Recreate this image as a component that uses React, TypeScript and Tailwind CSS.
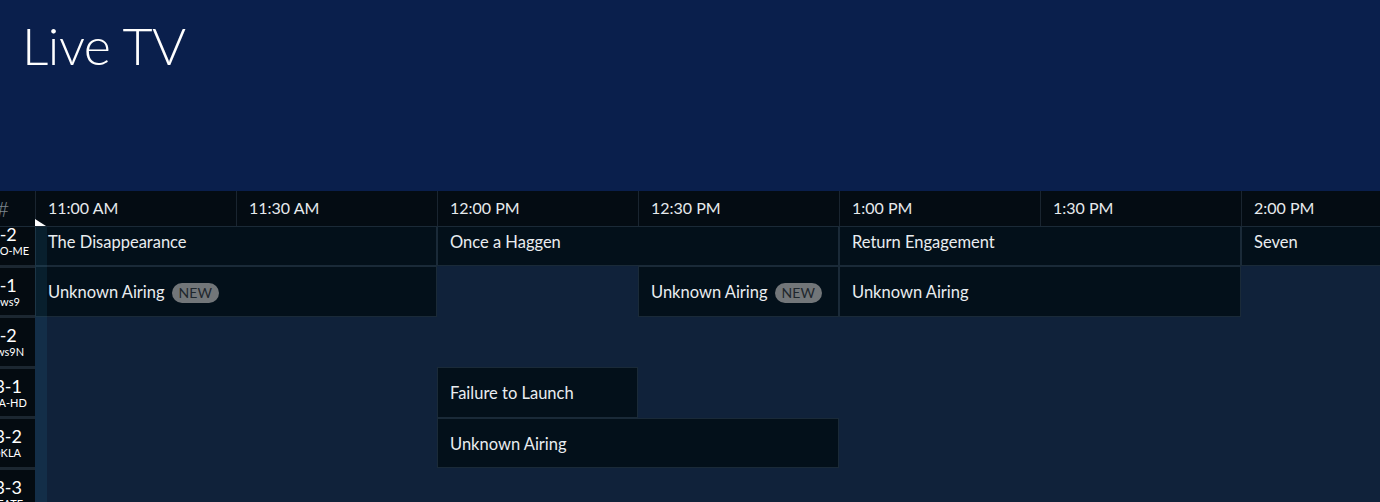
import React from "react";

type Program = { title?: string; start: number; end: number; isNew?: boolean };

// minutes from 11:00 AM
const PX_PER_MIN = 201 / 30;

const slots = ["11:00 AM", "11:30 AM", "12:00 PM", "12:30 PM", "1:00 PM", "1:30 PM", "2:00 PM"];

const channels = [
  { num: "9-2", name: "KOCO-ME" },
  { num: "9-1", name: "News9" },
  { num: "9-2", name: "News9N" },
  { num: "13-1", name: "KETA-HD" },
  { num: "13-2", name: "KOKLA" },
  { num: "13-3", name: "CREATE" },
];

const rows: Program[][] = [
  [
    { title: "The Disappearance", start: 0, end: 60 },
    { title: "Once a Haggen", start: 60, end: 120 },
    { title: "Return Engagement", start: 120, end: 180 },
    { title: "Seven", start: 180, end: 300 },
  ],
  [
    { title: "Unknown Airing", start: 0, end: 60, isNew: true },
    { start: 60, end: 90 },
    { title: "Unknown Airing", start: 90, end: 120, isNew: true },
    { title: "Unknown Airing", start: 120, end: 180 },
  ],
  [],
  [
    { start: 0, end: 60 },
    { title: "Failure to Launch", start: 60, end: 90 },
  ],
  [
    { start: 0, end: 60 },
    { title: "Unknown Airing", start: 60, end: 120 },
  ],
  [],
];

const ProgramCell = ({ p }: { p: Program }) => {
  const width = (p.end - p.start) * PX_PER_MIN;
  if (!p.title) {
    return <div className="h-full shrink-0" style={{ width }} />;
  }
  return (
    <div
      className="h-full shrink-0 flex items-center gap-[7px] pl-[12px] pt-[3px] bg-[#03101a] border border-[#1a2a38] text-[16.5px] text-[#e9edf0] whitespace-nowrap overflow-hidden"
      style={{ width }}
    >
      <span>{p.title}</span>
      {p.isNew && (
        <span className="rounded-full bg-[#727679] text-[#1f272d] text-[14px] leading-none px-[7px] py-[3px]">
          NEW
        </span>
      )}
    </div>
  );
};

export default function App() {
  return (
    <div className="w-[1380px] h-[502px] overflow-hidden bg-[#10223a] font-['Lato','Liberation_Sans',sans-serif]">
      {/* Hero */}
      <div className="h-[191px] bg-[#0a1f4c] pl-[22px] pt-[19px]">
        <h1 className="text-[52px] leading-none font-light text-white tracking-[-0.5px]">Live TV</h1>
      </div>

      {/* Time header */}
      <div className="relative z-10 h-[36px] flex bg-[#040c13] border-b border-[#1b2a37]">
        <div className="w-[35px] shrink-0 overflow-hidden flex justify-end items-center">
          <div className="w-[64px] shrink-0 text-center text-[22px] font-light text-[#7a848c] leading-none">#</div>
        </div>
        {slots.map((s) => (
          <div
            key={s}
            className="w-[201px] shrink-0 border-l border-[#1a2530] flex items-center pl-[12px] pb-[1px] text-[16px] text-[#e6eaed] whitespace-nowrap"
          >
            {s}
          </div>
        ))}
        {/* now marker */}
        <div className="absolute left-[35px] bottom-0 w-0 h-0 border-l-[11px] border-l-white border-t-[7px] border-t-transparent" />
      </div>

      {/* Guide body */}
      <div className="relative h-[275px] overflow-hidden">
        <div className="flex -mt-[11.5px]">
          <div className="w-[35px] shrink-0 bg-[#1c2731]">
            {channels.map((c, i) => (
              <div key={i} className="h-[50.5px] py-[1.5px]">
                <div className="h-full bg-[#040b11] overflow-hidden flex justify-end items-center">
                  <div className="w-[64px] shrink-0 flex flex-col items-center text-white">
                    <span className="text-[18px] leading-[20px]">{c.num}</span>
                    <span className="text-[11px] leading-[13px]">{c.name}</span>
                  </div>
                </div>
              </div>
            ))}
          </div>
          <div className="flex-1 overflow-hidden">
            {rows.map((r, i) => (
              <div key={i} className="h-[50.5px] flex">
                {r.map((p, j) => (
                  <ProgramCell key={j} p={p} />
                ))}
              </div>
            ))}
          </div>
        </div>
        {/* elapsed-time band */}
        <div className="absolute left-[35px] top-0 bottom-0 w-[12px] bg-[#2a7a9a]/15 pointer-events-none" />
      </div>
    </div>
  );
}
